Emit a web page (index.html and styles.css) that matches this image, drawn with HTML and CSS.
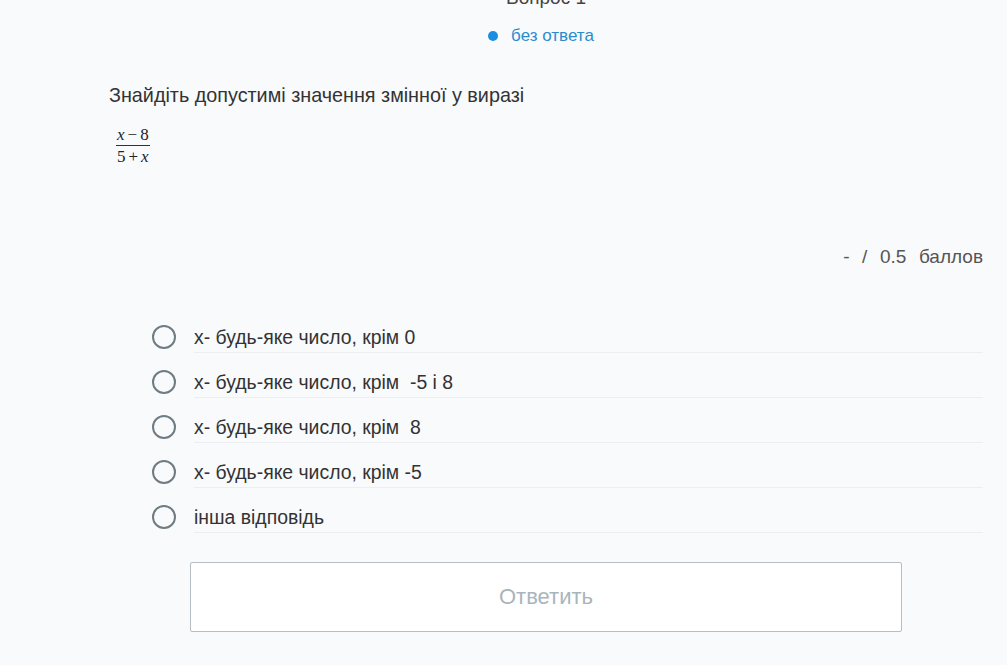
FILE: index.html
```html
<!DOCTYPE html>
<html lang="uk">
<head>
<meta charset="utf-8">
<link rel="stylesheet" href="styles.css">
</head>
<body>
<div class="page">
  <div class="head">
    <div class="qnum">Вопрос 1</div>
    <div class="status"><span class="dot"></span><span class="stext">без ответа</span></div>
  </div>
  <div class="qtext">Знайдіть допустимі значення змінної у виразі</div>
  <div class="formula">
    <span class="frac">
      <span class="num"><i>x</i><span class="op">−</span>8</span>
      <span class="den">5<span class="op">+</span><i>x</i></span>
    </span>
  </div>
  <div class="score">-&nbsp; /&nbsp; 0.5&nbsp; баллов</div>
  <ul class="options">
    <li class="opt"><span class="radio"></span><span class="label">x- будь-яке число, крім 0</span></li>
    <li class="opt"><span class="radio"></span><span class="label">x- будь-яке число, крім&nbsp; -5 і 8</span></li>
    <li class="opt"><span class="radio"></span><span class="label">x- будь-яке число, крім&nbsp; 8</span></li>
    <li class="opt"><span class="radio"></span><span class="label">x- будь-яке число, крім -5</span></li>
    <li class="opt"><span class="radio"></span><span class="label">інша відповідь</span></li>
  </ul>
  <div class="actions"><button class="submit">Ответить</button></div>
</div>
</body>
</html>
```
FILE: styles.css
```css
html, body {
  margin: 0;
  padding: 0;
  background: #f9fafc;
  font-family: "Liberation Sans", Arial, sans-serif;
  color: #333;
}
.page {
  width: 874px;
  margin-left: 109px;
}
.head {
  display: flex;
  flex-direction: column;
  align-items: center;
  margin-top: -13px;
}
.qnum {
  font-size: 19px;
  line-height: 22px;
  color: #444;
}
.status {
  display: flex;
  align-items: center;
  margin-top: 17px;
  margin-left: -10px;
}
.dot {
  width: 10px;
  height: 10px;
  border-radius: 50%;
  background: #1a8fe0;
  margin-right: 13px;
}
.stext {
  font-size: 17px;
  color: #2a8ccf;
  line-height: 20px;
}
.qtext {
  margin-top: 37px;
  font-size: 19.8px;
  line-height: 24px;
  color: #333;
}
.formula {
  margin-top: 19px;
  padding-left: 7px;
  height: 40px;
}
.frac {
  display: inline-flex;
  flex-direction: column;
  align-items: center;
  font-family: "Liberation Serif", "Times New Roman", serif;
  font-size: 17px;
  line-height: 17px;
  color: #222;
}
.frac .op {
  padding: 0 3px;
}
.frac .num {
  border-bottom: 1px solid #333;
  padding: 0 1px 2px;
}
.frac .den {
  padding-top: 2px;
}
.score {
  margin-top: 80px;
  text-align: right;
  font-size: 19px;
  line-height: 22px;
  color: #555;
  word-spacing: 1px;
}
.options {
  list-style: none;
  margin: 54px 0 0;
  padding: 0 0 0 43px;
}
.opt {
  display: flex;
  align-items: flex-start;
  height: 45px;
}
.radio {
  width: 20px;
  height: 20px;
  border: 2px solid #6f7c83;
  border-radius: 50%;
  flex: none;
  margin: 3px 18px 0 0;
}
.label {
  flex: 1;
  height: 30px;
  font-size: 19.4px;
  line-height: 30px;
  border-bottom: 1px solid #eceef1;
  color: #333;
}
.actions {
  display: flex;
  justify-content: center;
  margin-top: 15px;
}
.submit {
  width: 712px;
  height: 70px;
  background: #fff;
  border: 1px solid #b6bec4;
  border-radius: 2px;
  font-family: "Liberation Sans", Arial, sans-serif;
  font-size: 22px;
  color: #a9b5bc;
}
```
